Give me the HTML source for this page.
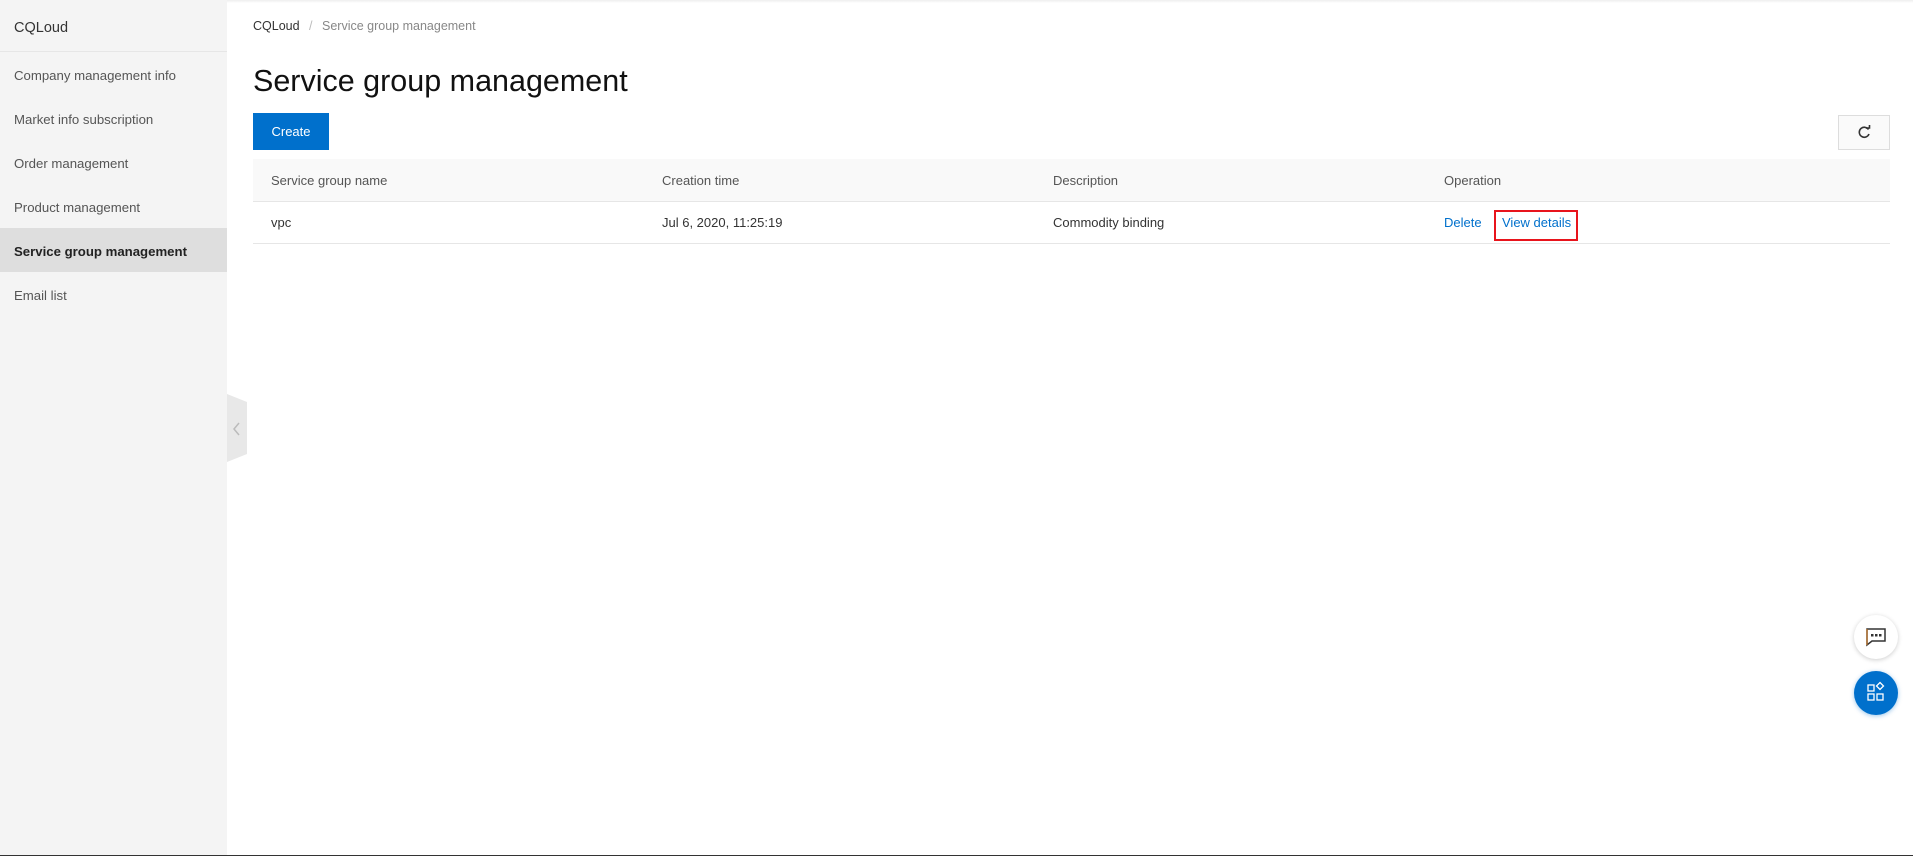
<!DOCTYPE html>
<html><head><meta charset="utf-8"><style>
*{margin:0;padding:0;box-sizing:border-box}
body{width:1913px;height:856px;overflow:hidden;font-family:"Liberation Sans",sans-serif;background:#fff;position:relative;color:#333}
.side{position:absolute;left:0;top:0;width:227px;height:856px;background:#f4f4f4}
.side .hd{height:52px;border-bottom:1px solid #e6e6e6;padding-left:14px;line-height:56px;font-size:14.5px;color:#333}
.side .it{height:44px;line-height:48px;padding-left:14px;font-size:13.2px;color:#555}
.side .act{background:#dedede;font-weight:bold;color:#222}
.abs{position:absolute}
.top{position:absolute;left:227px;right:0;top:0;height:3px;background:linear-gradient(#eee,#fff)}
.th{position:absolute;left:253px;width:1637px;top:159px;height:43px;background:#f9f9f9;border-bottom:1px solid #e6e6e6}
.tr{position:absolute;left:253px;width:1637px;top:202px;height:42px;border-bottom:1px solid #e6e6e6}
.c{position:absolute;font-size:13px;top:0;line-height:43px}
</style></head><body>
<div class="top"></div>
<div class="side">
<div class="hd">CQLoud</div>
<div class="it">Company management info</div>
<div class="it">Market info subscription</div>
<div class="it">Order management</div>
<div class="it">Product management</div>
<div class="it act">Service group management</div>
<div class="it">Email list</div>
</div>
<svg class="abs" style="left:227px;top:394px" width="21" height="70"><polygon points="0,0 20,8 20,60 0,68" fill="#e8e8e8"/><path d="M12,29 L7,35 L12,41" fill="none" stroke="#bbb" stroke-width="1.5"/></svg>
<div class="abs" style="left:253px;top:19px;font-size:12.5px;color:#333">CQLoud <span style="color:#bbb;margin:0 6px">/</span> <span style="color:#888">Service group management</span></div>
<div class="abs" style="left:253px;top:59px;font-size:30.5px;color:#111;line-height:44px">Service group management</div>
<div class="abs" style="left:253px;top:113px;width:76px;height:37px;background:#0070cc;color:#fff;font-size:13px;line-height:37px;text-align:center">Create</div>
<div class="abs" style="left:1838px;top:115px;width:52px;height:35px;border:1px solid #ddd;background:#fafafa"><svg width="50" height="33"><path d="M29.5,13.5 A5,5 0 1 0 30,18" fill="none" stroke="#333" stroke-width="1.6"/><path d="M27,12 L30.5,12 L30.5,9" fill="none" stroke="#333" stroke-width="1.6"/></svg></div>
<div class="th">
<div class="c" style="left:18px;color:#555">Service group name</div>
<div class="c" style="left:409px;color:#555">Creation time</div>
<div class="c" style="left:800px;color:#555">Description</div>
<div class="c" style="left:1191px;color:#555">Operation</div>
</div>
<div class="tr">
<div class="c" style="left:18px;line-height:42px">vpc</div>
<div class="c" style="left:409px;line-height:42px">Jul 6, 2020, 11:25:19</div>
<div class="c" style="left:800px;line-height:42px">Commodity binding</div>
<div class="c" style="left:1191px;line-height:42px;color:#0070cc">Delete</div>
<div class="c" style="left:1249px;line-height:42px;color:#0070cc">View details</div>
</div>
<div class="abs" style="left:1494px;top:210px;width:84px;height:31px;border:2px solid #e8141c"></div>
<div class="abs" style="left:1854px;top:615px;width:44px;height:44px;border-radius:50%;background:#fff;box-shadow:0 1px 5px rgba(0,0,0,.2)"><svg width="44" height="44"><path d="M13,14 H31 V26 H18 L13,30 Z" fill="none" stroke="#333" stroke-width="1.5"/><path d="M13,14 V30" stroke="#c07020" stroke-width="1.2"/><rect x="17" y="19" width="2.5" height="2.5" fill="#333"/><rect x="21" y="19" width="2.5" height="2.5" fill="#333"/><rect x="25" y="19" width="2.5" height="2.5" fill="#333"/></svg></div>
<div class="abs" style="left:1854px;top:671px;width:44px;height:44px;border-radius:50%;background:#0070cc;box-shadow:0 1px 5px rgba(0,112,204,.4)"><svg width="44" height="44" fill="none" stroke="#fff" stroke-width="1.3"><rect x="14" y="14" width="6" height="6"/><rect x="14" y="23" width="6" height="6"/><rect x="23" y="23" width="6" height="6"/><path d="M26,11.5 L29.5,15 L26,18.5 L22.5,15 Z"/></svg></div>
<div class="abs" style="left:0;top:855px;width:1913px;height:1px;background:#333"></div>
</body></html>
